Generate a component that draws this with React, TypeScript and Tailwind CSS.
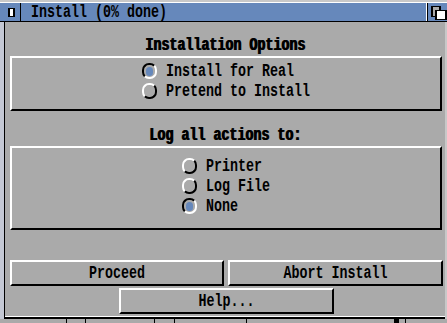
import React from "react";

function T({ children, heavy }: { children: React.ReactNode; heavy?: boolean }) {
  return heavy ? (
    <span className="inline-block scale-y-[1.4] translate-y-[1px] font-bold [text-shadow:1px_0_0_#000]">{children}</span>
  ) : (
    <span className="inline-block scale-y-[1.4] translate-y-[1px] font-bold">{children}</span>
  );
}

function Radio({ checked }: { checked?: boolean }) {
  return checked ? (
    <div className="w-[15px] h-[16px] rounded-[7px] border-2 border-t-black border-l-black border-r-white border-b-white flex items-center justify-center">
      <div className="w-[7px] h-[9px] rounded-full bg-[#6688bb]" />
    </div>
  ) : (
    <div className="w-[15px] h-[16px] rounded-[7px] border-2 border-t-white border-l-white border-r-black border-b-black" />
  );
}

function Option({ label, checked }: { label: string; checked?: boolean }) {
  return (
    <div className="flex items-center gap-[9px] h-[20px]">
      <Radio checked={checked} />
      <T>{label}</T>
    </div>
  );
}

function Button({ label, w }: { label: string; w: string }) {
  return (
    <div
      className={`${w} h-[26px] border-2 border-t-white border-l-white border-r-black border-b-black flex items-center justify-center`}
    >
      <T>{label}</T>
    </div>
  );
}

export default function App() {
  return (
    <div className="w-[447px] h-[323px] overflow-hidden flex flex-col bg-[#aaaaaa] text-black font-['Liberation_Mono',monospace] text-[13.33px] leading-[14px]">
      {/* screen strip above */}
      <div className="h-[2px] bg-[#c8c8c8]" />
      {/* title bar */}
      <div className="h-[20px] flex border-t border-t-white border-b border-b-black bg-[#6688bb]">
        <div className="w-[21px] h-full flex items-center pl-[8px] border-r border-r-black">
          <div className="w-[7px] h-[9px] border-x-2 border-y border-black bg-white" />
        </div>
        <div className="flex-1 flex items-center pl-[10px]">
          <T>Install (0% done)</T>
        </div>
        <div className="w-[21px] h-full flex border-l border-l-white">
          <div className="w-[20px] h-full border-l border-l-black">
            <svg width="19" height="18" viewBox="0 0 19 18">
              <rect x="3" y="3" width="10" height="11" fill="#000" />
              <rect x="5" y="4" width="6" height="9" fill="#aaaaaa" />
              <rect x="7" y="7" width="12" height="10" fill="#000" />
              <rect x="9" y="8" width="8" height="8" fill="#fff" />
            </svg>
          </div>
        </div>
      </div>
      {/* body */}
      <div className="flex-1 flex">
        <div className="w-[4px] bg-[#c4c8d4]" />
        <div className="flex-1 flex flex-col border-l border-l-black">
          <div className="pt-[16px] h-[30px] flex justify-center">
            <T heavy>Installation Options</T>
          </div>
          <div className="mt-[4px] ml-[5px] w-[432px] h-[55px] border-2 border-t-white border-l-white border-r-black border-b-black flex justify-center pt-[3px]">
            <div className="flex flex-col items-start">
              <Option label="Install for Real" checked />
              <Option label="Pretend to Install" />
            </div>
          </div>
          <div className="mt-[17px] h-[14px] flex justify-center">
            <T heavy>Log all actions to:</T>
          </div>
          <div className="mt-[4px] ml-[5px] w-[432px] h-[84px] border-2 border-t-white border-l-white border-r-black border-b-black flex justify-center pt-[8px]">
            <div className="flex flex-col items-start">
              <Option label="Printer" />
              <Option label="Log File" />
              <Option label="None" checked />
            </div>
          </div>
          <div className="mt-[30px] ml-[5px] flex gap-[4px]">
            <Button label="Proceed" w="w-[214px]" />
            <Button label="Abort Install" w="w-[215px]" />
          </div>
          <div className="mt-[2px] ml-[114px] flex">
            <Button label="Help..." w="w-[215px]" />
          </div>
          <div className="mt-[2px] h-[1px] bg-white" />
          <div className="h-[2px] bg-black" />
        </div>
        <div className="w-[2px] bg-[#c8c8c8]" />
      </div>
      {/* screen strip below */}
      <div className="h-[4px] bg-[#aaaaaa] flex">
        <div className="ml-[66px] w-[1px] bg-black" />
        <div className="ml-[18px] w-[1px] bg-black" />
        <div className="ml-[68px] w-[1px] bg-black" />
        <div className="ml-[19px] w-[1px] bg-black" />
        <div className="ml-[71px] w-[1px] bg-black" />
        <div className="ml-[147px] w-[5px] bg-black" />
        <div className="ml-[6px] w-[1px] bg-black" />
      </div>
    </div>
  );
}
